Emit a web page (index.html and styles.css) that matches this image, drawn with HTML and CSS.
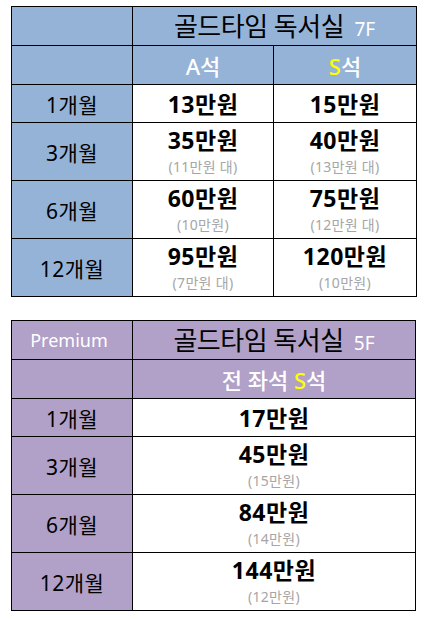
FILE: index.html
```html
<!DOCTYPE html>
<html lang="ko">
<head>
<meta charset="utf-8">
<link rel="stylesheet" href="styles.css">
</head>
<body>
<table class="price blue">
  <colgroup><col class="c1"><col class="c2"><col class="c3"></colgroup>
  <tr class="r-title">
    <td></td>
    <td colspan="2" class="title">골드타임 독서실 <span class="floor">7F</span></td>
  </tr>
  <tr class="r-head">
    <td></td>
    <td class="seat">A석</td>
    <td class="seat"><span class="y">S</span>석</td>
  </tr>
  <tr class="r-single">
    <td class="label">1개월</td>
    <td class="val"><div class="main">13만원</div></td>
    <td class="val"><div class="main">15만원</div></td>
  </tr>
  <tr class="r-double">
    <td class="label">3개월</td>
    <td class="val"><div class="main">35만원</div><div class="sub">(11만원 대)</div></td>
    <td class="val"><div class="main">40만원</div><div class="sub">(13만원 대)</div></td>
  </tr>
  <tr class="r-double">
    <td class="label">6개월</td>
    <td class="val"><div class="main">60만원</div><div class="sub">(10만원)</div></td>
    <td class="val"><div class="main">75만원</div><div class="sub">(12만원 대)</div></td>
  </tr>
  <tr class="r-double">
    <td class="label">12개월</td>
    <td class="val"><div class="main">95만원</div><div class="sub">(7만원 대)</div></td>
    <td class="val"><div class="main">120만원</div><div class="sub">(10만원)</div></td>
  </tr>
</table>

<table class="price purple">
  <colgroup><col class="c1"><col class="c23"></colgroup>
  <tr class="r-title">
    <td class="premium">Premium</td>
    <td class="title">골드타임 독서실 <span class="floor">5F</span></td>
  </tr>
  <tr class="r-head">
    <td></td>
    <td class="seat">전 좌석 <span class="y">S</span>석</td>
  </tr>
  <tr class="r-single">
    <td class="label">1개월</td>
    <td class="val"><div class="main">17만원</div></td>
  </tr>
  <tr class="r-double">
    <td class="label">3개월</td>
    <td class="val"><div class="main">45만원</div><div class="sub">(15만원)</div></td>
  </tr>
  <tr class="r-double">
    <td class="label">6개월</td>
    <td class="val"><div class="main">84만원</div><div class="sub">(14만원)</div></td>
  </tr>
  <tr class="r-double">
    <td class="label">12개월</td>
    <td class="val"><div class="main">144만원</div><div class="sub">(12만원)</div></td>
  </tr>
</table>
</body>
</html>
```
FILE: styles.css
```css
html, body {
  margin: 0;
  padding: 0;
  background: #ffffff;
}
body {
  padding: 6px 8px 0 11px;
  font-family: "Noto Sans", "Noto Sans CJK KR", sans-serif;
  color: #000;
}
.price {
  width: 405px;
  border-collapse: collapse;
  table-layout: fixed;
  border: 1px solid #000;
}
.price + .price {
  margin-top: 23px;
}
.c1 { width: 121px; }
.c2 { width: 141px; }
.c3 { width: 143px; }
.price td {
  border: 1px solid #000;
  padding: 0;
  text-align: center;
  vertical-align: middle;
  background: #fff;
}
.blue .r-title td, .blue .r-head td, .blue .label { background: #95b3d7; }
.purple .r-title td, .purple .r-head td, .purple .label { background: #b1a0c7; }
.r-title td { height: 38px; }
.r-head td { height: 38px; }
.r-single td { height: 37px; }
.r-double td { height: 57px; }
.title {
  font-size: 26px;
  letter-spacing: -0.5px;
  line-height: 1;
}
.floor {
  color: #fff;
  font-size: 19px;
  letter-spacing: 0;
  margin-left: 4px;
}
.premium {
  color: #fff;
  font-size: 18px;
  padding-right: 6px !important;
}
.seat {
  color: #fff;
  font-size: 22px;
  font-weight: 500;
}
.y { color: #ffff00; }
.label {
  font-size: 21px;
  letter-spacing: 0.5px;
}
.main {
  font-size: 23px;
  font-weight: 700;
  line-height: 30px;
  letter-spacing: 0.5px;
}
.sub {
  font-size: 14px;
  line-height: 24px;
  color: #a6a6a6;
  letter-spacing: 0.3px;
}
```
